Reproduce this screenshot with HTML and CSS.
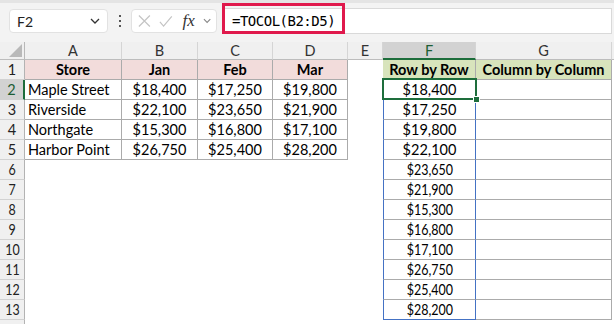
FILE: index.html
```html
<!DOCTYPE html>
<html>
<head>
<meta charset="utf-8">
<link rel="stylesheet" href="styles.css">
</head>
<body>
<div class="app">
  <div class="toolbar">
    <div class="namebox">
      <span class="nb-text">F2</span>
      <svg class="chev" width="10" height="6" viewBox="0 0 10 6"><path d="M1 1 L5 5 L9 1" fill="none" stroke="#333" stroke-width="1.3"/></svg>
    </div>
    <div class="dots"><i></i><i></i><i></i></div>
    <div class="btngroup">
      <svg width="14" height="14" viewBox="0 0 14 14"><path d="M1 1 L13 13 M13 1 L1 13" stroke="#c4c4c4" stroke-width="1.3" fill="none"/></svg>
      <svg width="15" height="13" viewBox="0 0 15 13"><path d="M1 7 L5 11.5 L14 1" stroke="#c4c4c4" stroke-width="1.3" fill="none"/></svg>
      <span class="fx">fx</span>
      <svg width="9" height="6" viewBox="0 0 9 6"><path d="M1 1 L4.5 4.5 L8 1" fill="none" stroke="#888" stroke-width="1.2"/></svg>
    </div>
    <div class="formula">
      <span class="ftext">=TOCOL(B2:D5)</span>
      <span class="redbox"></span>
    </div>
  </div>

  <div class="sheet">
    <div class="ch corner"><span class="tri"></span></div>
    <div class="ch">A</div><div class="ch">B</div><div class="ch">C</div><div class="ch">D</div><div class="ch">E</div><div class="ch chsel">F</div><div class="ch">G</div><div class="ch fill"></div>

    <div class="rh">1</div>
    <div class="c b pink bold">Store</div><div class="c b pink bold">Jan</div><div class="c b pink bold">Feb</div><div class="c b pink bold">Mar</div>
    <div class="c"></div><div class="c b green bold">Row by Row</div><div class="c b green bold">Column by Column</div><div class="c"></div>

    <div class="rh rhsel">2</div>
    <div class="c b left">Maple Street</div><div class="c b">$18,400</div><div class="c b">$17,250</div><div class="c b">$19,800</div>
    <div class="c"></div><div class="c f active">$18,400</div><div class="c b"></div><div class="c"></div>

    <div class="rh">3</div>
    <div class="c b left">Riverside</div><div class="c b">$22,100</div><div class="c b">$23,650</div><div class="c b">$21,900</div>
    <div class="c"></div><div class="c f">$17,250</div><div class="c b"></div><div class="c"></div>

    <div class="rh">4</div>
    <div class="c b left">Northgate</div><div class="c b">$15,300</div><div class="c b">$16,800</div><div class="c b">$17,100</div>
    <div class="c"></div><div class="c f">$19,800</div><div class="c b"></div><div class="c"></div>

    <div class="rh">5</div>
    <div class="c b left">Harbor Point</div><div class="c b">$26,750</div><div class="c b">$25,400</div><div class="c b">$28,200</div>
    <div class="c"></div><div class="c f">$22,100</div><div class="c b"></div><div class="c"></div>

    <div class="rh"><span class="cond">6</span></div>
    <div class="c"></div><div class="c"></div><div class="c"></div><div class="c"></div><div class="c"></div>
    <div class="c f"><span class="cond">$23,650</span></div><div class="c b"></div><div class="c"></div>

    <div class="rh"><span class="cond">7</span></div>
    <div class="c"></div><div class="c"></div><div class="c"></div><div class="c"></div><div class="c"></div>
    <div class="c f"><span class="cond">$21,900</span></div><div class="c b"></div><div class="c"></div>

    <div class="rh"><span class="cond">8</span></div>
    <div class="c"></div><div class="c"></div><div class="c"></div><div class="c"></div><div class="c"></div>
    <div class="c f"><span class="cond">$15,300</span></div><div class="c b"></div><div class="c"></div>

    <div class="rh"><span class="cond">9</span></div>
    <div class="c"></div><div class="c"></div><div class="c"></div><div class="c"></div><div class="c"></div>
    <div class="c f"><span class="cond">$16,800</span></div><div class="c b"></div><div class="c"></div>

    <div class="rh"><span class="cond">10</span></div>
    <div class="c"></div><div class="c"></div><div class="c"></div><div class="c"></div><div class="c"></div>
    <div class="c f"><span class="cond">$17,100</span></div><div class="c b"></div><div class="c"></div>

    <div class="rh"><span class="cond">11</span></div>
    <div class="c"></div><div class="c"></div><div class="c"></div><div class="c"></div><div class="c"></div>
    <div class="c f"><span class="cond">$26,750</span></div><div class="c b"></div><div class="c"></div>

    <div class="rh"><span class="cond">12</span></div>
    <div class="c"></div><div class="c"></div><div class="c"></div><div class="c"></div><div class="c"></div>
    <div class="c f"><span class="cond">$25,400</span></div><div class="c b"></div><div class="c"></div>

    <div class="rh"><span class="cond">13</span></div>
    <div class="c"></div><div class="c"></div><div class="c"></div><div class="c"></div><div class="c"></div>
    <div class="c f flast"><span class="cond">$28,200</span></div><div class="c b"></div><div class="c"></div>

    <div class="rh"></div>
    <div class="c"></div><div class="c"></div><div class="c"></div><div class="c"></div><div class="c"></div><div class="c"></div><div class="c"></div><div class="c"></div>
  </div>
</div>
</body>
</html>
```

FILE: styles.css
```css
html, body {
  margin: 0;
  padding: 0;
  background: #ffffff;
}
.app {
  width: 614px;
  height: 324px;
  overflow: hidden;
  font-family: Lato, "Liberation Sans", sans-serif;
  color: #000;
}
.toolbar {
  height: 42px;
  box-sizing: border-box;
  background: #f3f3f3;
  border-top: 3px solid #e4e4e4;
  display: flex;
  align-items: flex-start;
  padding: 5px 0 0 9px;
}
.namebox {
  width: 99px;
  height: 24px;
  box-sizing: border-box;
  background: #fff;
  border: 1px solid #e2e2e2;
  border-radius: 4px;
  display: flex;
  align-items: center;
  justify-content: space-between;
  padding: 0 7px 0 7px;
  margin-top: 1px;
}
.nb-text {
  font-size: 14px;
  color: #222;
}
.dots {
  width: 23px;
  display: flex;
  flex-direction: column;
  align-items: center;
  gap: 3px;
  padding-top: 7px;
}
.dots i {
  display: block;
  width: 2px;
  height: 2px;
  background: #555;
}
.btngroup {
  width: 86px;
  height: 24px;
  box-sizing: border-box;
  background: #fff;
  border: 1px solid #e2e2e2;
  border-radius: 4px;
  display: flex;
  align-items: center;
  gap: 8px;
  padding: 0 5px 0 6px;
  margin-top: 1px;
}
.fx {
  font-family: "Liberation Serif", serif;
  font-style: italic;
  font-size: 17px;
  color: #333;
  line-height: 1;
  margin-top: -2px;
  margin-left: 2px;
}
.formula {
  position: relative;
  flex: 1;
  height: 26px;
  box-sizing: border-box;
  margin: 0 2px 0 5px;
  background: #fff;
  border: 1px solid #d9d9d9;
  display: flex;
  align-items: center;
  padding-left: 9px;
}
.ftext {
  font-family: "DejaVu Sans Mono", "Liberation Mono", monospace;
  font-size: 14px;
  letter-spacing: -0.5px;
  color: #000;
}
.redbox {
  position: absolute;
  left: -1px;
  top: -6px;
  width: 123px;
  height: 31px;
  box-sizing: border-box;
  border: 3px solid #e0194c;
}
.sheet {
  display: grid;
  grid-template-columns: 25px 97px 76px 75px 75px 35px 93px 136px 1fr;
  grid-template-rows: 18px repeat(13, 20px) 20px;
  font-size: 14.5px;
}
.ch {
  background: #f0f0f0;
  border-right: 1px solid #d5d5d5;
  border-bottom: 1px solid #bdbdbd;
  box-sizing: border-box;
  text-align: center;
  line-height: 17px;
  color: #333;
}
.ch.fill {
  border-right: none;
}
.corner {
  position: relative;
  border-right: 1px solid #b8b8b8;
}
.tri {
  position: absolute;
  right: 2px;
  bottom: 2px;
  width: 0;
  height: 0;
  border-left: 13px solid transparent;
  border-bottom: 13px solid #b9b9b9;
}
.chsel {
  background: #d2d2d2;
  border-bottom: 2px solid #1d6d3b;
  color: #1d5e35;
}
.rh {
  background: #f0f0f0;
  border-right: 1px solid #b3b3b3;
  border-bottom: 1px solid #d2d2d2;
  box-sizing: border-box;
  text-align: center;
  line-height: 20px;
  color: #222;
}
.rhsel {
  background: #d2d2d2;
  color: #1d5e35;
  border-right: 2px solid #1d6d3b;
}
.c {
  box-sizing: border-box;
  text-align: center;
  line-height: 20px;
  white-space: nowrap;
  overflow: visible;
}
.b {
  border-right: 1px solid #ababab;
  border-bottom: 1px solid #ababab;
}
.left {
  text-align: left;
  padding-left: 3px;
}
.bold {
  font-weight: 700;
}
.pink {
  background: #f2dcdb;
}
.green {
  background: #d8e4bc;
}
.f {
  border-left: 1px solid #4472c4;
  border-right: 1px solid #4472c4;
  border-bottom: 1px solid #ababab;
}
.flast {
  border-bottom: 1px solid #4472c4;
}
.active {
  position: relative;
}
.active::before {
  content: "";
  position: absolute;
  left: -2px;
  top: -2px;
  right: -2px;
  bottom: -1px;
  border: 2px solid #1e6e3c;
}
.active::after {
  content: "";
  position: absolute;
  right: -5px;
  bottom: -4px;
  width: 5px;
  height: 5px;
  background: #1e6e3c;
  border: 1px solid #fff;
}
.cond {
  display: inline-block;
  transform: scaleX(0.86);
}
```
